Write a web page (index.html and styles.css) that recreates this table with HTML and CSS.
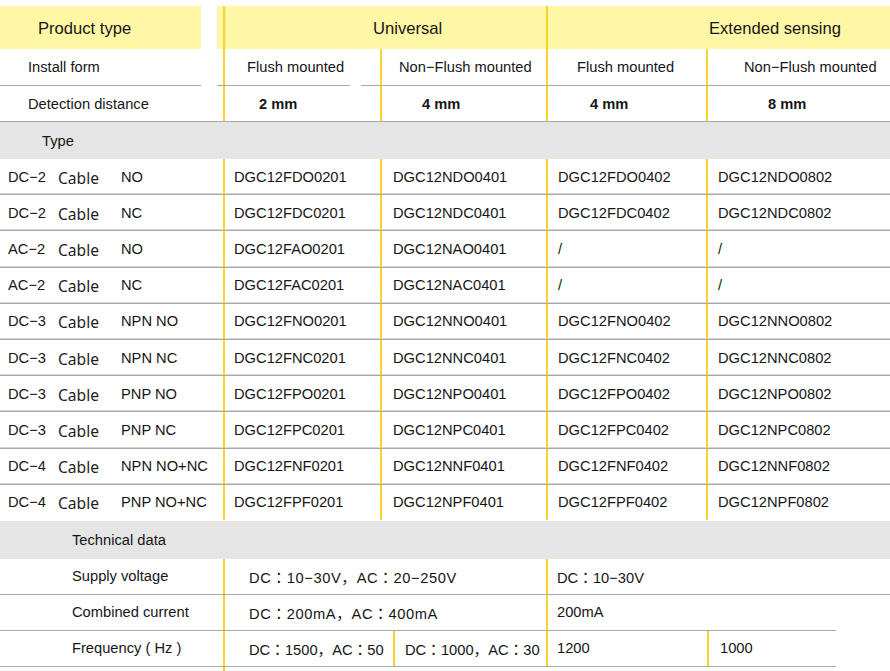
FILE: index.html
```html
<!DOCTYPE html>
<html>
<head>
<meta charset="utf-8">
<link rel="stylesheet" href="styles.css">
</head>
<body>
<div class="sheet">
  <div class="row head">
    <div class="cell h-type">Product type</div>
    <div class="cell yl span2 h-uni">Universal</div>
    <div class="cell yl span2 h-ext">Extended sensing</div>
  </div>
  <div class="row install">
    <div class="cell lbl">Install form</div>
    <div class="cell yl p-a">Flush mounted</div>
    <div class="cell yl p-b">Non−Flush mounted</div>
    <div class="cell yl p-c">Flush mounted</div>
    <div class="cell yl p-d">Non−Flush mounted</div>
  </div>
  <div class="row dist">
    <div class="cell lbl">Detection distance</div>
    <div class="cell yl b d-a">2 mm</div>
    <div class="cell yl b d-b">4 mm</div>
    <div class="cell yl b d-c">4 mm</div>
    <div class="cell yl b d-d">8 mm</div>
  </div>
  <div class="band type"><span>Type</span></div>

  <div class="row data">
    <div class="cell t"><span class="k">DC−2</span><span class="cab">Cable</span><span>NO</span></div>
    <div class="cell yl c1">DGC12FDO0201</div><div class="cell yl c2">DGC12NDO0401</div><div class="cell yl c3">DGC12FDO0402</div><div class="cell yl c4">DGC12NDO0802</div>
  </div>
  <div class="row data">
    <div class="cell t"><span class="k">DC−2</span><span class="cab">Cable</span><span>NC</span></div>
    <div class="cell yl c1">DGC12FDC0201</div><div class="cell yl c2">DGC12NDC0401</div><div class="cell yl c3">DGC12FDC0402</div><div class="cell yl c4">DGC12NDC0802</div>
  </div>
  <div class="row data">
    <div class="cell t"><span class="k">AC−2</span><span class="cab">Cable</span><span>NO</span></div>
    <div class="cell yl c1">DGC12FAO0201</div><div class="cell yl c2">DGC12NAO0401</div><div class="cell yl c3">/</div><div class="cell yl c4">/</div>
  </div>
  <div class="row data">
    <div class="cell t"><span class="k">AC−2</span><span class="cab">Cable</span><span>NC</span></div>
    <div class="cell yl c1">DGC12FAC0201</div><div class="cell yl c2">DGC12NAC0401</div><div class="cell yl c3">/</div><div class="cell yl c4">/</div>
  </div>
  <div class="row data">
    <div class="cell t"><span class="k">DC−3</span><span class="cab">Cable</span><span>NPN NO</span></div>
    <div class="cell yl c1">DGC12FNO0201</div><div class="cell yl c2">DGC12NNO0401</div><div class="cell yl c3">DGC12FNO0402</div><div class="cell yl c4">DGC12NNO0802</div>
  </div>
  <div class="row data">
    <div class="cell t"><span class="k">DC−3</span><span class="cab">Cable</span><span>NPN NC</span></div>
    <div class="cell yl c1">DGC12FNC0201</div><div class="cell yl c2">DGC12NNC0401</div><div class="cell yl c3">DGC12FNC0402</div><div class="cell yl c4">DGC12NNC0802</div>
  </div>
  <div class="row data">
    <div class="cell t"><span class="k">DC−3</span><span class="cab">Cable</span><span>PNP NO</span></div>
    <div class="cell yl c1">DGC12FPO0201</div><div class="cell yl c2">DGC12NPO0401</div><div class="cell yl c3">DGC12FPO0402</div><div class="cell yl c4">DGC12NPO0802</div>
  </div>
  <div class="row data">
    <div class="cell t"><span class="k">DC−3</span><span class="cab">Cable</span><span>PNP NC</span></div>
    <div class="cell yl c1">DGC12FPC0201</div><div class="cell yl c2">DGC12NPC0401</div><div class="cell yl c3">DGC12FPC0402</div><div class="cell yl c4">DGC12NPC0802</div>
  </div>
  <div class="row data">
    <div class="cell t"><span class="k">DC−4</span><span class="cab">Cable</span><span>NPN NO+NC</span></div>
    <div class="cell yl c1">DGC12FNF0201</div><div class="cell yl c2">DGC12NNF0401</div><div class="cell yl c3">DGC12FNF0402</div><div class="cell yl c4">DGC12NNF0802</div>
  </div>
  <div class="row data last">
    <div class="cell t"><span class="k">DC−4</span><span class="cab">Cable</span><span>PNP NO+NC</span></div>
    <div class="cell yl c1">DGC12FPF0201</div><div class="cell yl c2">DGC12NPF0401</div><div class="cell yl c3">DGC12FPF0402</div><div class="cell yl c4">DGC12NPF0802</div>
  </div>

  <div class="band tech"><span>Technical data</span></div>
  <div class="trow supply">
    <div class="cell tl">Supply voltage</div>
    <div class="cell yl s2 v1 wide">DC：10−30V，AC：20−250V</div>
    <div class="cell yl s3 v2">DC：10−30V</div>
  </div>
  <div class="trow current">
    <div class="cell tl">Combined current</div>
    <div class="cell yl s2 v1 wide">DC：200mA，AC：400mA</div>
    <div class="cell yl s3 v2">200mA</div>
  </div>
  <div class="trow freq">
    <div class="cell tl">Frequency ( Hz )</div>
    <div class="cell yl v1">DC：1500，AC：50</div>
    <div class="cell yl f2">DC：1000，AC：30</div>
    <div class="cell yl v2">1200</div>
    <div class="cell yl f4">1000</div>
    <div class="cell"></div>
  </div>
  <div class="trow tail">
    <div class="cell"></div>
    <div class="cell yl"></div>
  </div>
</div>
</body>
</html>
```

FILE: styles.css
```css
:root {
  --ybg: #fff6a6;
  --yline: #fcd12e;
  --rule: #a9a9a9;
  --band: #e5e5e5;
}

body {
  margin: 0;
  background: #ffffff;
  font-family: "Liberation Sans", Arial, "Noto Sans CJK JP", sans-serif;
  font-size: 14.7px;
  color: #161616;
}

.sheet {
  padding-top: 6px;
}

.row {
  display: grid;
  grid-template-columns: 223px 157px 166px 160px 184px;
}

.trow {
  display: grid;
  grid-template-columns: 223px 170px 153px 161px 129px 54px;
}

.cell {
  display: flex;
  align-items: center;
  white-space: nowrap;
  min-width: 0;
}

.yl {
  border-left: 2px solid var(--yline);
}

.span2 {
  grid-column: span 2;
}

/* header */
.head {
  height: 43px;
  font-size: 16.6px;
}
.head .cell {
  padding-top: 3px;
  box-sizing: border-box;
}
.h-type {
  padding-left: 38px;
  background: linear-gradient(to right, var(--ybg) 0 201px, #fff 201px 217px, var(--ybg) 217px);
}
.h-uni {
  background: var(--ybg);
  padding-left: 148px;
}
.h-ext {
  background: var(--ybg);
  padding-left: 161px;
}

/* install / distance */
.install {
  height: 37px;
  padding-bottom: 1px;
  box-sizing: border-box;
  background: linear-gradient(to right, var(--rule) 0 201px, transparent 201px 217px, var(--rule) 217px 350px, transparent 350px 361px, var(--rule) 361px) left bottom / 100% 1px no-repeat;
}
.dist {
  height: 36px;
  padding-bottom: 1px;
  box-sizing: border-box;
  background: linear-gradient(var(--rule), var(--rule)) left bottom / 100% 1px no-repeat;
}
.lbl { padding-left: 28px; }
.p-a { padding-left: 22px; }
.p-b { padding-left: 17px; }
.p-c { padding-left: 29px; }
.p-d { padding-left: 36px; }

.b { font-weight: bold; }
.d-a { padding-left: 34px; }
.d-b { padding-left: 40px; }
.d-c { padding-left: 42px; }
.d-d { padding-left: 60px; }

/* grey bands */
.band {
  background: var(--band);
  display: flex;
  align-items: center;
}
.type {
  height: 37px;
  padding-left: 42px;
}
.tech {
  height: 38px;
  padding-left: 72px;
}

/* data rows */
.data {
  height: 36.2px;
  box-sizing: border-box;
  padding-bottom: 1px;
  background:
    linear-gradient(var(--rule), var(--rule)) left bottom / 100% 1px no-repeat,
    linear-gradient(#d6d6d6, #d6d6d6) left calc(100% - 1px) / 100% 1px no-repeat;
}
.data.last {
  background: none;
}
.t {
  padding-left: 8px;
}
.k {
  width: 50px;
}
.cab {
  width: 63px;
  font-family: "Noto Sans", "Open Sans", sans-serif;
  font-size: 15.6px;
  color: #1e1e1e;
  position: relative;
  top: 1px;
}
.c1 { padding-left: 9px; }
.c2 { padding-left: 11px; }
.c3 { padding-left: 10px; }
.c4 { padding-left: 10px; }

/* technical rows */
.supply {
  height: 36px;
  padding-bottom: 1px;
  box-sizing: border-box;
  background: linear-gradient(var(--rule), var(--rule)) left bottom / 100% 1px no-repeat;
}
.current {
  height: 36px;
  padding-bottom: 1px;
  box-sizing: border-box;
  background: linear-gradient(var(--rule), var(--rule)) left bottom / 836px 1px no-repeat;
}
.freq {
  height: 36px;
  padding-bottom: 1px;
  box-sizing: border-box;
  background: linear-gradient(var(--rule), var(--rule)) left bottom / 836px 1px no-repeat;
}
.tail {
  height: 4px;
}
.s2 { grid-column: span 2; }
.s3 { grid-column: span 3; }
.tl { padding-left: 72px; }
.v1 { padding-left: 24px; }
.v2 { padding-left: 9px; }
.f2 { padding-left: 10px; }
.f4 { padding-left: 11px; }
.wide { letter-spacing: 0.6px; }
```
